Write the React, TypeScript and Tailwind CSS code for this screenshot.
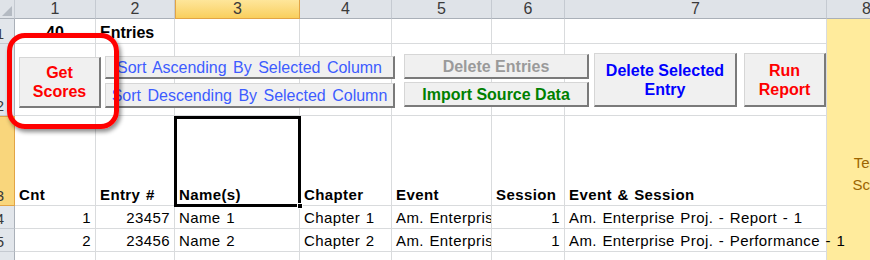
import React from "react";

const cols = ["", "1", "2", "3", "4", "5", "6", "7", "8"];

function ColHead({ label, active }: { label: string; active?: boolean }) {
  if (active) {
    return (
      <div className="flex items-center justify-center border-x border-b border-[#e2a445] bg-gradient-to-b from-[#fee69a] to-[#f9cf5c] text-[16px] text-[#3a3a3a]">
        {label}
      </div>
    );
  }
  return (
    <div className="flex items-center justify-center border-r border-b border-r-[#c5cad1] border-b-[#aab0b8] bg-[#dfe3e8] text-[16px] text-[#3a3a3a]">
      {label}
    </div>
  );
}

function RowHead({ label, active }: { label: string; active?: boolean }) {
  return (
    <div
      className={
        active
          ? "flex items-end justify-end overflow-hidden border-y border-r border-[#e2a445] bg-[#f9d67c] pr-[10px] text-[15px] leading-[18px] text-[#3a3a3a]"
          : "flex items-end justify-end overflow-hidden border-r border-b border-r-[#aab0b8] border-b-[#c5cad1] bg-[#e2e6eb] pr-[10px] text-[15px] leading-[18px] text-[#3a3a3a]"
      }
    >
      {label}
    </div>
  );
}

function Cell({
  children,
  align = "left",
  bold,
  spill,
}: {
  children?: React.ReactNode;
  align?: "left" | "right" | "center";
  bold?: boolean;
  spill?: boolean;
}) {
  const justify =
    align === "right" ? "justify-end pr-[4px]" : align === "center" ? "justify-center" : "justify-start pl-[4px]";
  return (
    <div
      className={`flex items-end whitespace-nowrap border-r border-b border-[#d9dbdd] pb-[1px] leading-[18px] tracking-[0.4px] [word-spacing:1px] ${justify} ${
        bold ? "font-bold" : ""
      } ${spill ? "relative z-10 overflow-visible" : "overflow-hidden"}`}
    >
      {children}
    </div>
  );
}

function Yellow({ children }: { children?: React.ReactNode }) {
  return <div className="bg-[#ffeb9c]">{children}</div>;
}

const btn =
  "absolute flex items-center justify-center text-center border-t border-l border-t-[#d6d6d6] border-l-[#d6d6d6] border-r-2 border-b-2 border-r-[#7a7a7a] border-b-[#7a7a7a] bg-[#f0f0f0] text-[16px] leading-[19px]";

export default function App() {
  return (
    <div className="relative h-[260px] w-[870px] overflow-hidden bg-white font-['Liberation_Sans',Arial,sans-serif] text-[15px] text-black">
      <div className="grid w-[907px] grid-cols-[15px_81px_79px_125px_92px_100px_73px_262px_80px] grid-rows-[19px_25px_72px_90px_23px_23px_23px]">
        {/* column headers */}
        <div className="relative border-r border-b border-r-[#c5cad1] border-b-[#aab0b8] bg-[#dfe3e8]">
          <svg className="absolute right-[2px] bottom-[2px]" width="10" height="10" viewBox="0 0 10 10">
            <polygon points="10,0 10,10 0,10" fill="#b4bac2" />
          </svg>
        </div>
        {cols.slice(1).map((c) => (
          <ColHead key={c} label={c} active={c === "3"} />
        ))}

        {/* row 1 */}
        <RowHead label="1" />
        <Cell align="center" bold>
          <span className="text-[16px] tracking-normal">40</span>
        </Cell>
        <Cell bold>
          <span className="text-[16px] tracking-normal">Entries</span>
        </Cell>
        <Cell />
        <Cell />
        <Cell />
        <Cell />
        <Cell />
        <Yellow />

        {/* row 2 */}
        <RowHead label="2" />
        <Cell />
        <Cell />
        <Cell />
        <Cell />
        <Cell />
        <Cell />
        <Cell />
        <Yellow />

        {/* row 3 */}
        <RowHead label="3" active />
        <Cell bold>Cnt</Cell>
        <Cell bold>Entry #</Cell>
        <Cell bold>Name(s)</Cell>
        <Cell bold>Chapter</Cell>
        <Cell bold>Event</Cell>
        <Cell bold>Session</Cell>
        <Cell bold>Event &amp; Session</Cell>
        <Yellow>
          <div className="flex h-full flex-col items-center justify-end pb-[10px] pl-[10px] text-[15px] leading-[22px] text-[#9c6500]">
            <span>Team</span>
            <span>Score</span>
          </div>
        </Yellow>

        {/* row 4 */}
        <RowHead label="4" />
        <Cell align="right">1</Cell>
        <Cell align="right">23457</Cell>
        <Cell>Name 1</Cell>
        <Cell>Chapter 1</Cell>
        <Cell>Am. Enterprise Proj.</Cell>
        <Cell align="right">1</Cell>
        <Cell>Am. Enterprise Proj. - Report - 1</Cell>
        <Yellow />

        {/* row 5 */}
        <RowHead label="5" />
        <Cell align="right">2</Cell>
        <Cell align="right">23456</Cell>
        <Cell>Name 2</Cell>
        <Cell>Chapter 2</Cell>
        <Cell>Am. Enterprise Proj.</Cell>
        <Cell align="right">1</Cell>
        <Cell spill>Am. Enterprise Proj. - Performance - 1</Cell>
        <Yellow />

        {/* row 6 */}
        <RowHead label="6" />
        <Cell />
        <Cell />
        <Cell />
        <Cell />
        <Cell />
        <Cell />
        <Cell />
        <Yellow />
      </div>

      {/* form buttons */}
      <div className={`${btn} left-[19px] top-[57px] h-[51px] w-[82px] font-bold text-[#ff0000]`}>
        Get
        <br />
        Scores
      </div>
      <div className={`${btn} left-[105px] top-[56px] h-[23px] w-[290px] text-[#3d5cff] [word-spacing:2px]`}>
        Sort Ascending By Selected Column
      </div>
      <div className={`${btn} left-[105px] top-[83px] h-[25px] w-[290px] text-[#3d5cff] [word-spacing:2px]`}>
        Sort Descending By Selected Column
      </div>
      <div className={`${btn} left-[404px] top-[54px] h-[25px] w-[185px] font-bold text-[#9a9a9a]`}>
        Delete Entries
      </div>
      <div className={`${btn} left-[404px] top-[82px] h-[25px] w-[185px] font-bold text-[#008000]`}>
        Import Source Data
      </div>
      <div className={`${btn} left-[594px] top-[53px] h-[54px] w-[143px] font-bold text-[#0000ff]`}>
        Delete Selected
        <br />
        Entry
      </div>
      <div className={`${btn} left-[744px] top-[53px] h-[54px] w-[82px] font-bold text-[#ff0000]`}>
        Run
        <br />
        Report
      </div>

      {/* selected cell */}
      <div className="absolute left-[174px] top-[116px] h-[91px] w-[127px] border-[3px] border-black" />
      <div className="absolute left-[297px] top-[203px] h-[6px] w-[6px] border border-white bg-black" />

      {/* red callout */}
      <div className="absolute left-[7px] top-[33px] h-[96px] w-[112px] rounded-[18px] border-[5px] border-[#ff0000] shadow-[2px_3px_4px_rgba(0,0,0,0.45)]" />
    </div>
  );
}
